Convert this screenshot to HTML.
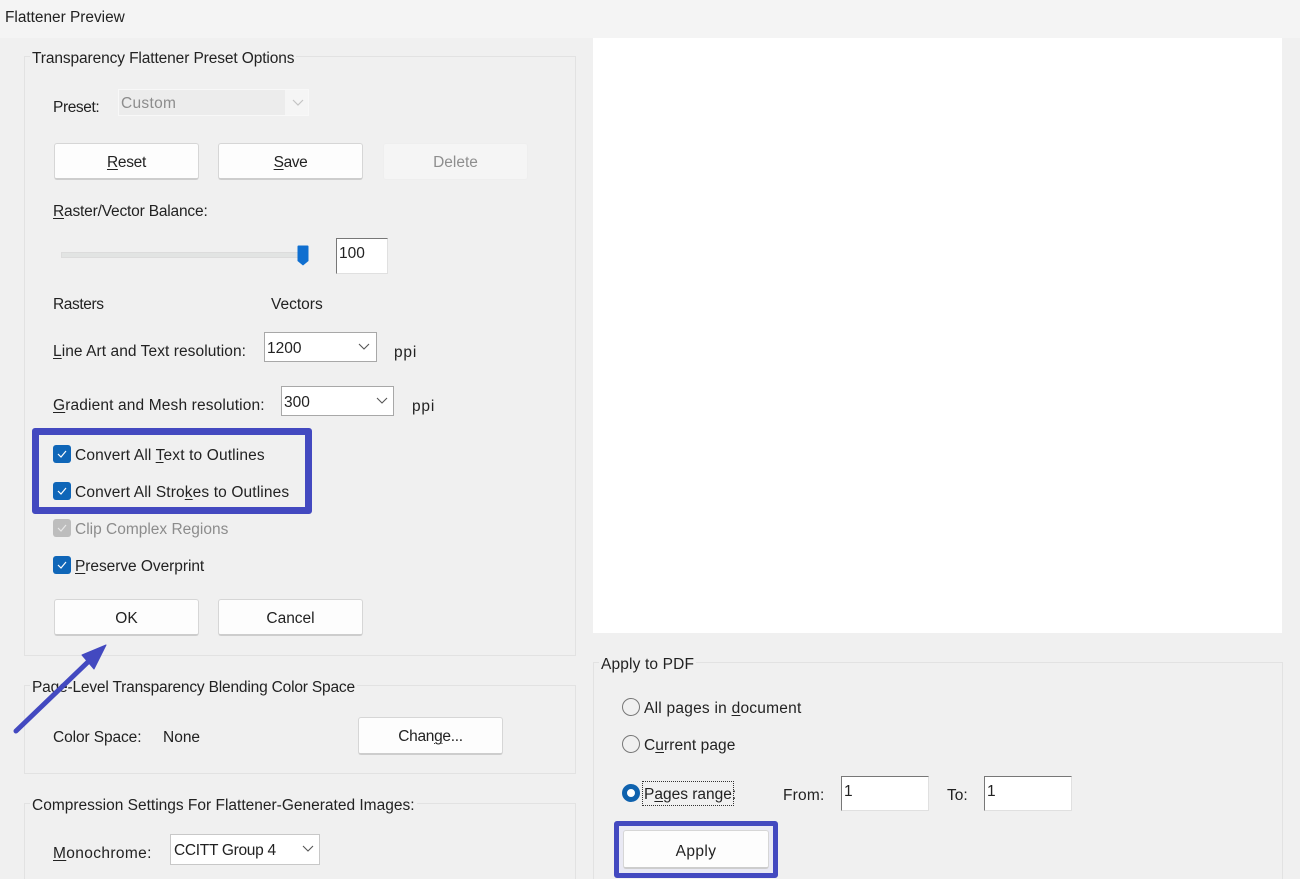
<!DOCTYPE html>
<html><head><meta charset="utf-8"><style>
html,body{margin:0;padding:0;overflow:hidden;width:1300px;height:879px}
body{background:#f0f0f0;font-family:"Liberation Sans",sans-serif;font-size:15.5px;color:#222}
#w{position:absolute;left:0;top:0;width:1300px;height:879px;overflow:hidden}
#w div{position:absolute}
.t{position:absolute;white-space:nowrap;line-height:20px}
.g{border:1px solid #e2e2e2;box-sizing:border-box}
.leg{background:#f0f0f0;height:20px;}
.b{background:#fdfdfd;border:1px solid #d6d6d6;border-bottom:2px solid #cdcdcd;border-radius:3px;box-sizing:border-box;text-align:center;line-height:37px}
.s{background:#fff;border:1px solid #a8a8a8;box-sizing:border-box;line-height:31px;padding-left:2px}
.i{background:#fff;border:1px solid #e0e0e0;border-top:1px solid #777;border-left:1px solid #777;box-sizing:border-box;padding-left:2px;line-height:30px}
.c{width:18px;height:18px;background:#0f66b8;border-radius:3px;left:53px}
.r{width:18px;height:18px;border:1px solid #777;border-radius:50%;box-sizing:border-box;left:622px}
u{text-underline-offset:2px;text-decoration-thickness:1px}
svg{position:absolute;overflow:visible}
</style></head><body><div id="w">
<div style="left:0;top:0;width:1300px;height:38px;background:#f4f4f4"></div>
<span class="t" style="left:5px;top:8px;font-size:15.4px">Flattener Preview</span>
<div style="left:593px;top:38px;width:689px;height:595px;background:#fff"></div>

<div class="g" style="left:24px;top:56px;width:552px;height:600px"></div>
<div class="g" style="left:24px;top:685px;width:552px;height:89px"></div>
<div class="g" style="left:24px;top:803px;width:552px;height:90px"></div>
<div class="g" style="left:593px;top:662px;width:690px;height:240px"></div>

<span class="t leg" style="left:30px;top:49px;padding:0 2px;letter-spacing:-.11px">Transparency Flattener Preset Options</span>
<span class="t" style="left:53px;top:98px;letter-spacing:-.4px">Preset:</span>
<div style="left:118px;top:89px;width:191px;height:27px;background:#f5f5f5;border:1px solid #f8f8f8;box-sizing:border-box"></div>
<div style="left:119px;top:90px;width:166px;height:25px;background:#ececec"></div>
<span class="t" style="left:121px;top:94px;color:#8c8c8c;letter-spacing:.3px">Custom</span>
<svg style="left:292px;top:98px" width="12" height="10"><path d="M1 2l5 5 5-5" fill="none" stroke="#c4c4c4" stroke-width="1.2"/></svg>

<div class="b" style="left:54px;top:143px;width:145px;height:37px;letter-spacing:-.3px"><u>R</u>eset</div>
<div class="b" style="left:218px;top:143px;width:145px;height:37px;letter-spacing:-.4px"><u>S</u>ave</div>
<div class="b" style="left:383px;top:143px;width:145px;height:37px;background:#f5f5f5;border:1px solid #eee;color:#8e8e8e">Delete</div>

<span class="t" style="left:53px;top:202px;letter-spacing:-.18px"><u>R</u>aster/Vector Balance:</span>
<div style="left:61px;top:252px;width:240px;height:6px;background:#e2e4e3;border:1px solid #dcdcdc;box-sizing:border-box"></div>
<svg style="left:297px;top:245px" width="12" height="22"><path d="M.5 1.500Q.5 .5 1.500 .5h9q1 0 1 1V16l-5.500 4.500L.5 16z" fill="#0f6fd0"/></svg>
<div class="i" style="left:336px;top:238px;width:52px;height:36px">100</div>
<span class="t" style="left:53px;top:295px;letter-spacing:-.4px">Rasters</span>
<span class="t" style="left:271px;top:295px">Vectors</span>

<span class="t" style="left:53px;top:342px;letter-spacing:.07px"><u>L</u>ine Art and Text resolution:</span>
<div class="s" style="left:264px;top:332px;width:113px;height:30px">1200</div>
<svg style="left:358px;top:342px" width="12" height="10"><path d="M1 2l5 5 5-5" fill="none" stroke="#555" stroke-width="1.100"/></svg>
<span class="t" style="left:394px;top:343px;letter-spacing:.8px">ppi</span>

<span class="t" style="left:53px;top:396px;letter-spacing:.14px"><u>G</u>radient and Mesh resolution:</span>
<div class="s" style="left:281px;top:386px;width:113px;height:30px">300</div>
<svg style="left:376px;top:396px" width="12" height="10"><path d="M1 2l5 5 5-5" fill="none" stroke="#555" stroke-width="1.100"/></svg>
<span class="t" style="left:412px;top:397px;letter-spacing:.8px">ppi</span>

<div class="c" style="top:445px"></div>
<svg style="left:53px;top:445px" width="18" height="18"><path d="M5 9l3 3 5-6" fill="none" stroke="#fff" stroke-width="1.200"/></svg>
<span class="t" style="left:75px;top:446px;letter-spacing:.14px">Convert All <u>T</u>ext to Outlines</span>
<div class="c" style="top:482px"></div>
<svg style="left:53px;top:482px" width="18" height="18"><path d="M5 9l3 3 5-6" fill="none" stroke="#fff" stroke-width="1.200"/></svg>
<span class="t" style="left:75px;top:483px;letter-spacing:.13px">Convert All Stro<u>k</u>es to Outlines</span>
<div class="c" style="top:519px;background:#bdbdbd"></div>
<svg style="left:53px;top:519px" width="18" height="18"><path d="M5 9l3 3 5-6" fill="none" stroke="#e8e8e8" stroke-width="1.200"/></svg>
<span class="t" style="left:75px;top:520px;color:#8c8c8c">Clip Complex Regions</span>
<div class="c" style="top:556px"></div>
<svg style="left:53px;top:556px" width="18" height="18"><path d="M5 9l3 3 5-6" fill="none" stroke="#fff" stroke-width="1.200"/></svg>
<span class="t" style="left:75px;top:557px;letter-spacing:-.05px"><u>P</u>reserve Overprint</span>

<div style="left:32px;top:428px;width:280px;height:86px;border:7px solid #4349c0;border-radius:3px;box-sizing:border-box"></div>

<div class="b" style="left:54px;top:599px;width:145px;height:37px">OK</div>
<div class="b" style="left:218px;top:599px;width:145px;height:37px">Cancel</div>

<span class="t leg" style="left:30px;top:678px;padding:0 2px;letter-spacing:-.18px">Page-Level Transparency Blending Color Space</span>
<span class="t" style="left:53px;top:728px;letter-spacing:-.1px">Color Space:</span>
<span class="t" style="left:163px;top:728px">None</span>
<div class="b" style="left:358px;top:717px;width:145px;height:38px;letter-spacing:-.3px">Chan<u>g</u>e...</div>

<svg style="left:0;top:0" width="1300" height="879"><path d="M16 731L90 660" stroke="#4349c0" stroke-width="5" stroke-linecap="round" fill="none"/><path d="M106 645L82 655L94 669z" fill="#4349c0" stroke="#4349c0" stroke-width="1" stroke-linejoin="round"/></svg>

<span class="t leg" style="left:30px;top:796px;padding:0 2px">Compression Settings For Flattener-Generated Images:</span>
<span class="t" style="left:53px;top:844px;letter-spacing:.36px"><u>M</u>onochrome:</span>
<div class="s" style="left:170px;top:834px;width:150px;height:31px;border-color:#c8c8c8;line-height:32px;padding-left:3px;letter-spacing:-.3px">CCITT Group 4</div>
<svg style="left:302px;top:844px" width="12" height="10"><path d="M1 2l5 5 5-5" fill="none" stroke="#555" stroke-width="1.100"/></svg>

<span class="t leg" style="left:599px;top:655px;padding:0 2px;letter-spacing:.15px">Apply to PDF</span>
<div class="r" style="top:698px"></div>
<span class="t" style="left:644px;top:699px;letter-spacing:.24px">All pages in <u>d</u>ocument</span>
<div class="r" style="top:735px"></div>
<span class="t" style="left:644px;top:736px;letter-spacing:.08px">C<u>u</u>rrent page</span>
<div class="r" style="top:784px;border:5px solid #0f62ae;background:#fff"></div>
<div style="left:642px;top:781px;width:92px;height:25px;border:1px dotted #333;box-sizing:border-box"></div>
<span class="t" style="left:644px;top:785px">P<u>a</u>ges range:</span>
<span class="t" style="left:783px;top:786px;letter-spacing:.2px">From:</span>
<div class="i" style="left:841px;top:776px;width:88px;height:35px">1</div>
<span class="t" style="left:947px;top:786px">To:</span>
<div class="i" style="left:984px;top:776px;width:88px;height:35px">1</div>
<div style="left:614px;top:821px;width:164px;height:57px;border:5px solid #4349c0;border-radius:3px;box-sizing:border-box;background:#e9e9f4"></div>
<div class="b" style="left:623px;top:830px;width:146px;height:39px;line-height:42px;letter-spacing:.4px">Apply</div>
</div></body></html>
